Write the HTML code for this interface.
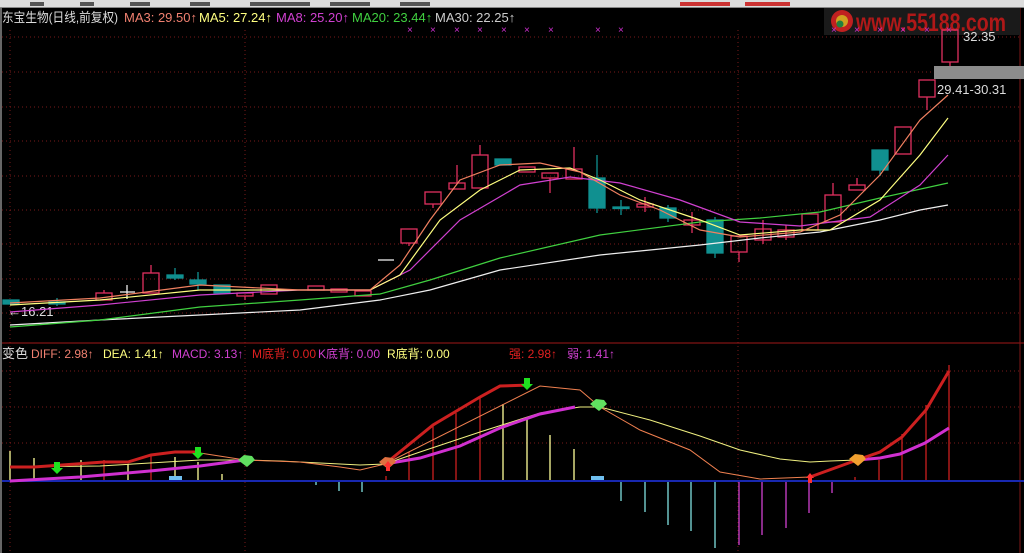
<!DOCTYPE html><html><head><meta charset="utf-8"><style>
body{margin:0;background:#000;width:1024px;height:553px;overflow:hidden;font-family:"Liberation Sans","Noto Sans CJK SC",sans-serif}
svg{display:block}
text{font-family:"Liberation Sans","Noto Sans CJK SC",sans-serif}
</style></head><body>
<svg width="1024" height="553" xmlns="http://www.w3.org/2000/svg" font-size="12">
<rect x="0" y="0" width="1024" height="8" fill="#ddd"/>
<rect x="0" y="7" width="1024" height="1" fill="#888"/>
<g fill="#555"><rect x="30" y="2" width="14" height="4"/><rect x="80" y="2" width="14" height="4"/><rect x="130" y="2" width="20" height="4"/><rect x="190" y="2" width="20" height="4"/><rect x="250" y="2" width="60" height="4"/><rect x="330" y="2" width="40" height="4"/><rect x="400" y="2" width="30" height="4"/></g>
<rect x="680" y="2" width="50" height="4" fill="#c33"/><rect x="745" y="2" width="45" height="4" fill="#c33"/>
<rect x="0" y="8" width="2" height="545" fill="#666"/>
<g stroke="#7a1a1a" stroke-dasharray="1,3" stroke-width="1">
<line x1="2" y1="37" x2="1020" y2="37"/><line x1="2" y1="72" x2="1020" y2="72"/><line x1="2" y1="107" x2="1020" y2="107"/><line x1="2" y1="141" x2="1020" y2="141"/><line x1="2" y1="176" x2="1020" y2="176"/><line x1="2" y1="210" x2="1020" y2="210"/><line x1="2" y1="244" x2="1020" y2="244"/><line x1="2" y1="279" x2="1020" y2="279"/><line x1="2" y1="313" x2="1020" y2="313"/>
<line x1="2" y1="371" x2="1020" y2="371"/><line x1="2" y1="407" x2="1020" y2="407"/><line x1="2" y1="443" x2="1020" y2="443"/>
<line x1="10" y1="30" x2="10" y2="553"/><line x1="245" y1="30" x2="245" y2="553"/><line x1="738" y1="30" x2="738" y2="553"/>
</g>
<line x1="2" y1="343" x2="1024" y2="343" stroke="#a01818"/>
<line x1="1020" y1="8" x2="1020" y2="553" stroke="#801818"/>
<text x="2" y="22" fill="#ddd" style="font-size:13px" textLength="116" lengthAdjust="spacingAndGlyphs">东宝生物(日线,前复权)</text>
<text x="124" y="22" fill="#f08070" style="font-size:13px">MA3: 29.50↑</text>
<text x="199" y="22" fill="#ffff80" style="font-size:13px">MA5: 27.24↑</text>
<text x="276" y="22" fill="#d040d0" style="font-size:13px">MA8: 25.20↑</text>
<text x="352" y="22" fill="#40d040" style="font-size:13px">MA20: 23.44↑</text>
<text x="435" y="22" fill="#ccc" style="font-size:13px">MA30: 22.25↑</text>
<g fill="#d030d0" style="font-size:10px"><text x="407" y="33">×</text><text x="430" y="33">×</text><text x="454" y="33">×</text><text x="477" y="33">×</text><text x="501" y="33">×</text><text x="524" y="33">×</text><text x="548" y="33">×</text><text x="595" y="33">×</text><text x="618" y="33">×</text></g>
<rect x="824" y="8" width="196" height="27" fill="#1a1a1a"/>
<circle cx="842" cy="21" r="11" fill="#c02020"/><circle cx="842" cy="21" r="6" fill="#d0a020"/><circle cx="840" cy="24" r="3.5" fill="#208040"/>
<text x="856" y="31" fill="#b01818" style="font-size:25px;font-weight:bold" textLength="150" lengthAdjust="spacingAndGlyphs">www.55188.com</text>
<g fill="#d030d0" style="font-size:10px"><text x="831" y="33">×</text><text x="854" y="33">×</text><text x="877" y="33">×</text><text x="900" y="33">×</text><text x="924" y="33">×</text><text x="946" y="33">×</text></g>
<rect x="934" y="66" width="90" height="13" fill="#8c8c8c"/>
<text x="963" y="41" fill="#ddd" style="font-size:13px">32.35</text>
<text x="937" y="94" fill="#ddd" style="font-size:13px">29.41-30.31</text>
<text x="8" y="316" fill="#ddd" style="font-size:13px">←16.21</text>
<g stroke-width="1.3">
<g fill="#109090" stroke="#109090">
<rect x="3" y="300" width="16" height="4"/><rect x="49" y="302" width="16" height="2"/><rect x="167" y="275" width="16" height="3"/><rect x="190" y="280" width="16" height="4"/><rect x="214" y="285" width="16" height="8"/><rect x="495" y="159" width="16" height="6"/><rect x="589" y="178" width="16" height="30"/><rect x="613" y="207" width="16" height="1.5"/><rect x="660" y="208" width="16" height="10"/><rect x="707" y="220" width="16" height="33"/><rect x="872" y="150" width="16" height="20"/>
<line x1="57" y1="298" x2="57" y2="306"/><line x1="175" y1="268" x2="175" y2="280"/><line x1="198" y1="272" x2="198" y2="290"/><line x1="597" y1="155" x2="597" y2="213"/><line x1="621" y1="200" x2="621" y2="215"/><line x1="668" y1="205" x2="668" y2="222"/><line x1="715" y1="217" x2="715" y2="258"/><line x1="880" y1="170" x2="880" y2="176"/></g>
<g fill="none" stroke="#e03060">
<rect x="96" y="293" width="16" height="7"/><rect x="143" y="273" width="16" height="20"/><rect x="237" y="293" width="16" height="3"/><rect x="261" y="285" width="16" height="9"/><rect x="308" y="286" width="16" height="4"/><rect x="331" y="289" width="16" height="3"/><rect x="355" y="291" width="16" height="5"/>
<rect x="401" y="229" width="16" height="14"/><rect x="425" y="192" width="16" height="12"/><rect x="449" y="183" width="16" height="6"/><rect x="472" y="155" width="16" height="33"/><rect x="519" y="167" width="16" height="5"/><rect x="542" y="173" width="16" height="5"/><rect x="566" y="169" width="16" height="10"/><rect x="637" y="204" width="16" height="3"/><rect x="684" y="220" width="16" height="5"/><rect x="731" y="236" width="16" height="16"/><rect x="755" y="229" width="16" height="11"/><rect x="778" y="230" width="16" height="7"/><rect x="802" y="214" width="16" height="16"/><rect x="825" y="195" width="16" height="27"/><rect x="849" y="185" width="16" height="5"/><rect x="895" y="127" width="16" height="27"/><rect x="919" y="80" width="16" height="17"/><rect x="942" y="30" width="16" height="32"/>
<line x1="151" y1="265" x2="151" y2="273"/><line x1="104" y1="290" x2="104" y2="293"/><line x1="245" y1="296" x2="245" y2="300"/><line x1="409" y1="243" x2="409" y2="246"/><line x1="433" y1="204" x2="433" y2="208"/><line x1="457" y1="165" x2="457" y2="183"/><line x1="480" y1="145" x2="480" y2="155"/><line x1="550" y1="178" x2="550" y2="193"/><line x1="574" y1="147" x2="574" y2="169"/><line x1="645" y1="197" x2="645" y2="212"/><line x1="692" y1="212" x2="692" y2="233"/><line x1="739" y1="252" x2="739" y2="262"/><line x1="763" y1="220" x2="763" y2="244"/><line x1="786" y1="225" x2="786" y2="240"/><line x1="833" y1="183" x2="833" y2="195"/><line x1="857" y1="178" x2="857" y2="185"/><line x1="927" y1="97" x2="927" y2="110"/><line x1="950" y1="62" x2="950" y2="66"/></g>
<g stroke="#eee"><line x1="120" y1="292" x2="135" y2="292"/><line x1="127" y1="285" x2="127" y2="299"/><line x1="378" y1="260" x2="394" y2="260"/></g>
</g>
<g fill="none" stroke-width="1.2">
<polyline stroke="#eee" points="10,325 100,320 200,315 300,310 380,300 430,290 500,270 600,255 700,245 760,238 820,232 880,220 920,210 948,205"/>
<polyline stroke="#40d040" points="10,327 100,320 200,307 300,300 380,294 430,280 500,258 600,235 700,222 760,218 820,212 880,198 948,183"/>
<polyline stroke="#d040d0" points="10,312 100,305 200,295 300,290 370,290 410,270 460,220 520,185 570,177 620,183 680,200 740,222 800,226 870,217 920,185 948,155"/>
<polyline stroke="#ffff80" points="10,305 100,300 200,290 300,290 370,290 400,275 440,220 480,190 520,170 570,168 600,180 640,200 700,220 740,235 800,230 830,230 880,200 920,155 948,118"/>
<polyline stroke="#f08060" points="10,303 100,298 200,285 300,290 370,290 400,265 430,220 460,180 500,165 540,163 580,172 620,195 660,210 700,230 740,237 800,232 840,215 880,175 920,120 948,95"/>
</g>
<text x="2" y="358" fill="#ddd" style="font-size:13px">变色</text>
<text x="31" y="358" fill="#f08070">DIFF: 2.98↑</text>
<text x="103" y="358" fill="#ffff80">DEA: 1.41↑</text>
<text x="172" y="358" fill="#d040d0">MACD: 3.13↑</text>
<text x="252" y="358" fill="#e02020">M底背: 0.00</text>
<text x="318" y="358" fill="#d040d0">K底背: 0.00</text>
<text x="387" y="358" fill="#ffff80">R底背: 0.00</text>
<text x="509" y="358" fill="#e02020">强: 2.98↑</text>
<text x="567" y="358" fill="#d040d0">弱: 1.41↑</text>
<g stroke-width="1.3">
<g stroke="#ffff99"><line x1="10" y1="451" x2="10" y2="481"/><line x1="34" y1="458" x2="34" y2="481"/><line x1="81" y1="460" x2="81" y2="481"/><line x1="128" y1="464" x2="128" y2="481"/><line x1="175" y1="457" x2="175" y2="481"/><line x1="198" y1="462" x2="198" y2="481"/><line x1="222" y1="474" x2="222" y2="481"/><line x1="503" y1="404" x2="503" y2="481"/><line x1="527" y1="418" x2="527" y2="481"/><line x1="550" y1="435" x2="550" y2="481"/><line x1="574" y1="449" x2="574" y2="481"/></g>
<g stroke="#cc2020"><line x1="104" y1="460" x2="104" y2="481"/><line x1="151" y1="455" x2="151" y2="481"/><line x1="386" y1="476" x2="386" y2="481"/><line x1="409" y1="452" x2="409" y2="481"/><line x1="433" y1="426" x2="433" y2="481"/><line x1="456" y1="413" x2="456" y2="481"/><line x1="480" y1="396" x2="480" y2="481"/><line x1="855" y1="477" x2="855" y2="481"/><line x1="879" y1="460" x2="879" y2="481"/><line x1="902" y1="434" x2="902" y2="481"/><line x1="926" y1="405" x2="926" y2="481"/><line x1="949" y1="365" x2="949" y2="481"/></g>
<g stroke="#80e0e0"><line x1="316" y1="481" x2="316" y2="485"/><line x1="339" y1="481" x2="339" y2="491"/><line x1="362" y1="481" x2="362" y2="492"/><line x1="621" y1="481" x2="621" y2="501"/><line x1="645" y1="481" x2="645" y2="512"/><line x1="668" y1="481" x2="668" y2="525"/><line x1="691" y1="481" x2="691" y2="531"/><line x1="715" y1="481" x2="715" y2="548"/></g>
<g stroke="#d040d0"><line x1="739" y1="481" x2="739" y2="545"/><line x1="762" y1="481" x2="762" y2="535"/><line x1="786" y1="481" x2="786" y2="528"/><line x1="809" y1="481" x2="809" y2="513"/><line x1="832" y1="481" x2="832" y2="493"/></g>
</g>
<rect x="169" y="476" width="13" height="4" fill="#70c0f0"/><rect x="591" y="476" width="13" height="4" fill="#70c0f0"/>
<line x1="2" y1="481" x2="1024" y2="481" stroke="#1828b0" stroke-width="2"/>
<g fill="none">
<polyline stroke="#f0f080" stroke-width="1" points="10,467 100,466 200,460 245,460 280,461 300,462 360,465 385,464 420,452 480,432 540,413 580,407 600,407 650,420 700,436 740,450 780,459 810,462 830,461 857,460"/>
<polyline stroke="#f08050" stroke-width="1" points="200,453 245,460 300,462 340,467 360,470 385,464 540,386 580,390 600,407 640,430 690,450 720,472 760,479 810,477"/>
<polyline stroke="#d030d0" stroke-width="3" points="10,481 80,477 150,471 200,466 245,460"/>
<polyline stroke="#d030d0" stroke-width="3" points="385,464 420,458 460,446 500,428 540,414 575,407"/>
<polyline stroke="#d030d0" stroke-width="3" points="857,460 880,458 900,454 925,443 949,428"/>
<polyline stroke="#cc2020" stroke-width="3" points="10,467 34,467 104,462 128,462 151,455 175,452 200,452"/>
<polyline stroke="#cc2020" stroke-width="3" points="385,464 433,425 480,397 500,386 530,385"/>
<polyline stroke="#cc2020" stroke-width="3" points="810,477 857,460 880,452 902,437 926,410 949,371"/>
</g>
<g fill="#20e020"><path d="M54,462h6v6h3l-6,6-6-6h3z"/><path d="M195,447h6v6h3l-6,6-6-6h3z"/><path d="M524,378h6v6h3l-6,6-6-6h3z"/></g>
<g><path d="M238,460l6-5 8,1 3,4-8,7z" fill="#60e060"/><path d="M590,404l6-5 8,1 3,4-8,7z" fill="#60e060"/><path d="M379,462l6-5 8,1 3,4-8,7z" fill="#e07040"/><path d="M849,459l6-5 8,1 3,4-8,7z" fill="#f0a030"/></g>
<path d="M806,478l4-5 4,5h-2v5h-4v-5z" fill="#ff3030"/><path d="M384,466l4-5 4,5h-2v5h-4v-5z" fill="#ff3030"/>
</svg></body></html>
